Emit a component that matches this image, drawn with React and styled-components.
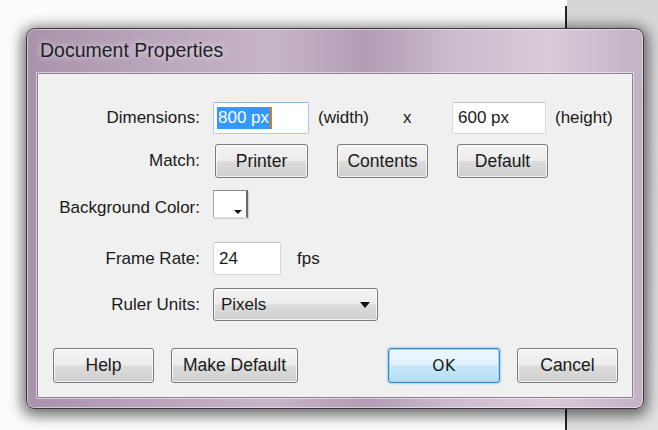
import React from "react";
import styled, { createGlobalStyle, css } from "styled-components";

const GlobalStyle = createGlobalStyle`
  html, body {
    margin: 0;
    padding: 0;
    background: #fcfcfc;
  }
  body {
    font-family: "Liberation Sans", Arial, sans-serif;
  }
`;

const Desktop = styled.div`
  position: relative;
  width: 658px;
  height: 430px;
  overflow: hidden;
  display: flex;
  background: #fcfcfc;
`;

const Workspace = styled.div`
  flex: 1;
  background: #fcfcfc;
`;

const Divider = styled.div`
  width: 2px;
  margin-top: 6px;
  background: #262626;
`;

const SidePane = styled.div`
  width: 91px;
  background: linear-gradient(180deg, #d6d6d6 0%, #e2e2e2 100%);
`;

const Window = styled.div`
  position: absolute;
  left: 26px;
  top: 28px;
  width: 618px;
  height: 381px;
  box-sizing: border-box;
  border: 1px solid #3a3a3a;
  border-radius: 9px 9px 8px 8px;
  padding: 0 10px 10px 10px;
  display: flex;
  flex-direction: column;
  background: linear-gradient(
    90deg,
    #a993ac 0%,
    #b9a5bb 20%,
    #c7b5c8 40%,
    #b29db4 55%,
    #cdbdce 70%,
    #d9cbd9 85%,
    #c3b1c4 100%
  );
  box-shadow: 0 3px 14px 4px rgba(0, 0, 0, 0.55),
    inset 0 0 0 1px rgba(255, 255, 255, 0.45);
`;

const TitleBar = styled.div`
  height: 44px;
  display: flex;
  align-items: center;
  padding: 0 0 2px 3px;
  box-sizing: border-box;
`;

const Title = styled.span`
  font-size: 19.5px;
  color: #1f1f28;
  text-shadow: 0 0 6px rgba(255, 255, 255, 0.8);
`;

const Panel = styled.div`
  flex: 1;
  background: #f0f0f0;
  border: 1px solid #8c8290;
  box-shadow: 0 0 0 1px rgba(255, 255, 255, 0.5);
  padding-top: 28px;
  display: flex;
  flex-direction: column;
`;

const Row = styled.div`
  display: grid;
  grid-template-columns: 162px 1fr;
  column-gap: 13px;
  align-items: ${({ $align }) => $align || "center"};
  height: ${({ $h }) => $h}px;
  margin-top: ${({ $top }) => $top || 0}px;
`;

const Label = styled.span`
  text-align: right;
  font-size: 17px;
  line-height: 20px;
  color: #1a1a1a;
  white-space: nowrap;
`;

const Controls = styled.div`
  display: flex;
  align-items: center;
  height: 100%;
`;

const DimensionGrid = styled.div`
  display: grid;
  grid-template-columns: 96px 94px 49px 94px auto;
  align-items: center;
  height: 100%;
`;

const Unit = styled.span`
  font-size: 17px;
  color: #1a1a1a;
  padding-left: ${({ $pad }) => $pad || 0}px;
`;

const TextBox = styled.div`
  box-sizing: border-box;
  width: ${({ $w }) => $w}px;
  height: ${({ $h }) => $h || 32}px;
  display: flex;
  align-items: center;
  padding-left: 5px;
  background: #ffffff;
  border: 1px solid #d4d8de;
  border-top-color: #b9bec6;
  border-radius: 2px;
  font-size: 17px;
  color: #1a1a1a;
  ${({ $focused }) =>
    $focused &&
    css`
      border-color: #a9cbeb;
      border-top-color: #8fb8e0;
      padding-left: 3px;
    `}
`;

const Selection = styled.span`
  background: #3399ff;
  color: #ffffff;
  padding: 1px 1px;
  border-right: 2px solid #d97a1c;
`;

const buttonFace = css`
  box-sizing: border-box;
  border: 1px solid #7a7a7a;
  border-radius: 3px;
  background: linear-gradient(
    180deg,
    #f4f4f4 0%,
    #ececec 48%,
    #dcdcdc 52%,
    #cfcfcf 100%
  );
  box-shadow: inset 0 0 0 1px rgba(255, 255, 255, 0.75);
  font-family: "Liberation Sans", Arial, sans-serif;
  font-size: 17.5px;
  color: #1a1a1a;
`;

const Button = styled.button`
  ${buttonFace}
  width: ${({ $w }) => $w}px;
  height: ${({ $h }) => $h || 34}px;
  margin-left: ${({ $ml }) => $ml || 0}px;
  padding: 0;
  ${({ $primary }) =>
    $primary &&
    css`
      border-color: #3a86c4;
      background: linear-gradient(
        180deg,
        #eef7fd 0%,
        #dff1fc 48%,
        #c7e8fb 52%,
        #b4ddf4 100%
      );
      box-shadow: inset 0 0 0 1px #9fd6f4, 0 0 2px 1px rgba(90, 170, 230, 0.45);
      font-family: "DejaVu Sans", sans-serif;
      font-size: 15.5px;
      letter-spacing: 0.5px;
    `}
`;

const Swatch = styled.div`
  position: relative;
  box-sizing: border-box;
  width: 35px;
  height: 28px;
  background: #ffffff;
  border-top: 1px solid #8a8a8a;
  border-left: 1px solid #a0a0a0;
  border-right: 2px solid #6a6a6a;
  border-bottom: 1px solid #e2e2e2;
  box-shadow: 1px 1px 0 #cfcfcf;

  &::after {
    content: "";
    position: absolute;
    right: 4px;
    bottom: 3px;
    border-left: 4px solid transparent;
    border-right: 4px solid transparent;
    border-top: 4px solid #111111;
  }
`;

const Select = styled.div`
  ${buttonFace}
  width: 165px;
  height: 33px;
  display: flex;
  align-items: center;
  justify-content: space-between;
  padding: 0 7px 0 7px;
  font-size: 17px;
`;

const Caret = styled.span`
  width: 0;
  height: 0;
  border-left: 5px solid transparent;
  border-right: 5px solid transparent;
  border-top: 6px solid #111111;
`;

const ButtonBar = styled.div`
  display: flex;
  justify-content: space-between;
  align-items: center;
  margin-top: 27px;
  padding: 0 14px 0 15px;
`;

const ButtonGroup = styled.div`
  display: flex;
  gap: 17px;
`;

export default function App() {
  return (
    <>
      <GlobalStyle />
      <Desktop>
        <Workspace />
        <Divider />
        <SidePane />
        <Window>
          <TitleBar>
            <Title>Document Properties</Title>
          </TitleBar>
          <Panel>
            <Row $h={32}>
              <Label>Dimensions:</Label>
              <DimensionGrid>
                <TextBox $w={96} $focused>
                  <Selection>800 px</Selection>
                </TextBox>
                <Unit $pad={9}>(width)</Unit>
                <Unit>x</Unit>
                <TextBox $w={94}>600 px</TextBox>
                <Unit $pad={9}>(height)</Unit>
              </DimensionGrid>
            </Row>
            <Row $h={34} $top={10}>
              <Label>Match:</Label>
              <Controls>
                <Button $w={93} $ml={2}>Printer</Button>
                <Button $w={91} $ml={29}>Contents</Button>
                <Button $w={91} $ml={29}>Default</Button>
              </Controls>
            </Row>
            <Row $h={28} $top={12} $align="end">
              <Label>Background Color:</Label>
              <Controls>
                <Swatch />
              </Controls>
            </Row>
            <Row $h={33} $top={24}>
              <Label>Frame Rate:</Label>
              <Controls>
                <TextBox $w={68} $h={33}>24</TextBox>
                <Unit $pad={16}>fps</Unit>
              </Controls>
            </Row>
            <Row $h={33} $top={13}>
              <Label>Ruler Units:</Label>
              <Controls>
                <Select>
                  <span>Pixels</span>
                  <Caret />
                </Select>
              </Controls>
            </Row>
            <ButtonBar>
              <ButtonGroup>
                <Button $w={101} $h={35}>Help</Button>
                <Button $w={127} $h={35}>Make Default</Button>
              </ButtonGroup>
              <ButtonGroup>
                <Button $w={112} $h={35} $primary>OK</Button>
                <Button $w={101} $h={35}>Cancel</Button>
              </ButtonGroup>
            </ButtonBar>
          </Panel>
        </Window>
      </Desktop>
    </>
  );
}
